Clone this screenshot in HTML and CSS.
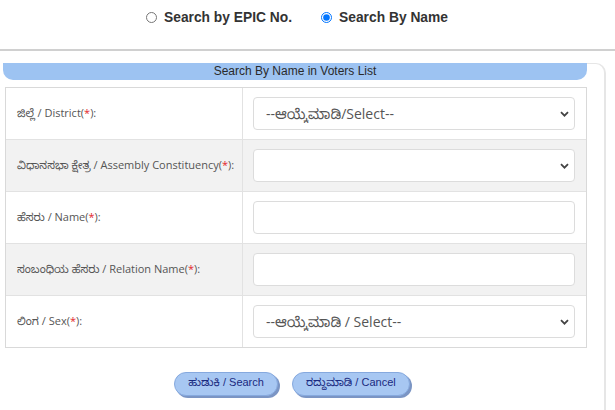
FILE: index.html
```html
<!DOCTYPE html>
<html lang="kn">
<head>
  <meta charset="UTF-8">
  <title>Search By Name in Voters List</title>
  <link rel="stylesheet" href="styles.css">
</head>
<body>

  <div class="search-type">
    <label class="radio-item"><input type="radio" name="stype" value="epic"> Search by EPIC No.</label>
    <label class="radio-item"><input type="radio" name="stype" value="name" checked> Search By Name</label>
  </div>
  <hr class="divider">

  <div class="panel">
    <div class="panel-head">Search By Name in Voters List</div>

    <table class="form-table">
      <tr>
        <td class="lbl">ಜಿಲ್ಲೆ / District(<span class="req">*</span>):</td>
        <td class="fld">
          <select class="ctrl">
            <option>--ಆಯ್ಕೆಮಾಡಿ/Select--</option>
          </select>
        </td>
      </tr>
      <tr class="alt">
        <td class="lbl">ವಿಧಾನಸಭಾ ಕ್ಷೇತ್ರ / Assembly Constituency(<span class="req">*</span>):</td>
        <td class="fld">
          <select class="ctrl">
            <option></option>
          </select>
        </td>
      </tr>
      <tr>
        <td class="lbl">ಹೆಸರು / Name(<span class="req">*</span>):</td>
        <td class="fld"><input type="text" class="ctrl"></td>
      </tr>
      <tr class="alt">
        <td class="lbl">ಸಂಬಂಧಿಯ ಹೆಸರು / Relation Name(<span class="req">*</span>):</td>
        <td class="fld"><input type="text" class="ctrl"></td>
      </tr>
      <tr>
        <td class="lbl">ಲಿಂಗ / Sex(<span class="req">*</span>):</td>
        <td class="fld">
          <select class="ctrl">
            <option>--ಆಯ್ಕೆಮಾಡಿ / Select--</option>
          </select>
        </td>
      </tr>
    </table>

    <div class="actions">
      <button type="button" class="pill-btn">ಹುಡುಕಿ / Search</button>
      <button type="button" class="pill-btn">ರದ್ದುಮಾಡಿ / Cancel</button>
    </div>
  </div>

</body>
</html>
```

FILE: styles.css
```css
body{
  margin: 0;
  background: #fff;
  font-family: "Liberation Sans", "Noto Sans", "Noto Sans Kannada", sans-serif;
  color: #333;
  overflow: hidden;
}

.search-type{
  height: 35px;
  display: flex;
  justify-content: center;
  align-items: center;
  gap: 29px;
  padding-right: 21px;
}

.radio-item{
  display: flex;
  align-items: center;
  gap: 7px;
  font-weight: bold;
  font-size: 13.8px;
  color: #333;
}

.radio-item input{
  margin: 0;
  width: 11px;
  height: 11px;
}

.divider{
  margin: 14px 0 0;
  border: 0;
  border-top: 2px solid #d0d0d0;
  height: 0;
}

.panel{
  margin: 12px 9px 0 3px;
  padding: 0 17px 0 0;
  border-top: 1px solid #e6e6e6;
  border-right: 2px solid #e6e6e6;
  border-top-right-radius: 10px;
  height: calc(100vh - 64px);
}

.panel-head{
  margin-top: -1px;
  background: #9dc3f2;
  height: 17px;
  line-height: 17px;
  font-size: 12px;
  text-align: center;
  color: #2a2a2a;
  border-radius: 0 0 10px 10px;
}

.form-table{
  margin: 7px 0 0 2px;
  width: calc(100% - 2px);
  border-collapse: separate;
  border-spacing: 0;
  border: 1px solid #d9d9d9;
  font-family: "Open Sans", "Noto Sans", "Noto Sans Kannada", sans-serif;
}

.form-table td{
  height: 51px;
  border: 1px solid #e2e2e2;
  border-width: 0 0 1px 0;
  padding: 0;
}

.form-table tr:last-child td{
  border-bottom: 0;
}

.form-table tr.alt td{
  background: #f2f2f2;
}

.lbl{
  width: 225px;
  padding-left: 11px !important;
  font-size: 11px;
  color: #555;
  border-right: 1px solid #e2e2e2 !important;
}

.req{
  color: #e3262b;
}

.fld{
  padding: 0 11px 0 10px !important;
}

.ctrl{
  display: block;
  width: 100%;
  height: 33px;
  box-sizing: border-box;
  border: 1px solid #dcdcdc;
  border-radius: 4px;
  background: #fff;
  padding: 0 12px;
  font-size: 14px;
  font-family: "Open Sans", "Noto Sans", "Noto Sans Kannada", sans-serif;
  color: #555;
}

select.ctrl{
  appearance: none;
  background-image: url("data:image/svg+xml,%3Csvg xmlns='http://www.w3.org/2000/svg' width='9' height='6' viewBox='0 0 9 6'%3E%3Cpath d='M1 1.2l3.5 3.5 3.5-3.5' fill='none' stroke='%23444' stroke-width='1.8'/%3E%3C/svg%3E");
  background-repeat: no-repeat;
  background-position: right 5px center;
}

.actions{
  display: flex;
  justify-content: center;
  gap: 14px;
  margin-top: 24px;
  padding-right: 6px;
}

.pill-btn{
  height: 24px;
  padding: 0 13px;
  background: #a7c7f2;
  border: 1px solid #86a9de;
  border-radius: 13px;
  box-shadow: 2px 2px 0 #7b95c4;
  color: #1a2a80;
  font-size: 11px;
  font-family: "Liberation Sans", "Noto Sans", "Noto Sans Kannada", sans-serif;
}
```
